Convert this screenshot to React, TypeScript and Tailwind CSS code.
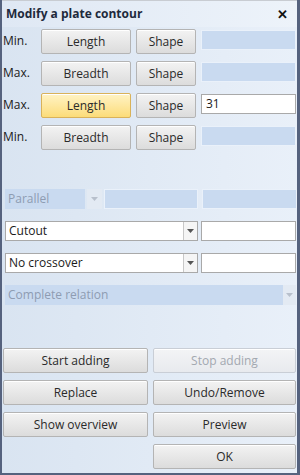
import React from "react";

const font = { fontFamily: '"Open Sans", "Noto Sans", sans-serif' };

function Btn({
  label,
  className = "",
  active = false,
  disabled = false,
}: {
  label: string;
  className?: string;
  active?: boolean;
  disabled?: boolean;
}) {
  const tone = active
    ? "border-[#d9b25a] bg-gradient-to-b from-[#fff3c4] to-[#fcdc78] text-[#2a2a2a]"
    : disabled
      ? "border-[#c9ced6] bg-gradient-to-b from-[#f3f4f6] to-[#e8eaee] text-[#a3a8b0]"
      : "border-[#b4b4b4] bg-gradient-to-b from-[#f3f3f3] to-[#dcdcdc] text-[#2a2a2a]";
  return (
    <div
      className={`flex h-[25px] items-center justify-center rounded-[2px] border text-[12px] shadow-[inset_0_1px_0_#ffffff] ${tone} ${className}`}
    >
      {label}
    </div>
  );
}

function BlueField({ className = "" }: { className?: string }) {
  return <div className={`h-[20px] border border-[#eaf1fa] bg-[#c9daf0] ${className}`} />;
}

function WhiteField({ value = "", className = "" }: { value?: string; className?: string }) {
  return (
    <div
      className={`flex h-[20px] items-center border border-[#a9a9a9] bg-white pl-[4px] text-[12px] text-[#1a1a1a] ${className}`}
    >
      {value}
    </div>
  );
}

function Arrow({ light = false }: { light?: boolean }) {
  return (
    <svg width="7" height="4" viewBox="0 0 7 4">
      <path d="M0 0H7L3.5 4Z" fill={light ? "#b8c0cc" : "#555"} />
    </svg>
  );
}

function Combo({ value, className = "" }: { value: string; className?: string }) {
  return (
    <div className={`flex h-[20px] border border-[#a9a9a9] bg-white ${className}`}>
      <div className="flex flex-1 items-center pl-[3px] text-[12px] text-[#1a1a1a]">{value}</div>
      <div className="flex w-[14px] items-center justify-center border-l border-[#c8c8c8] bg-[#f5f5f5]">
        <Arrow />
      </div>
    </div>
  );
}

function Row({ label, main, active = false, value }: { label: string; main: string; active?: boolean; value?: string }) {
  return (
    <div className="flex h-[25px]">
      <div className="w-[38px] pt-[3px] text-[12px] text-[#1a1a1a]">{label}</div>
      <Btn label={main} active={active} className="w-[90px]" />
      <Btn label="Shape" className="ml-[5px] w-[60px]" />
      {value !== undefined ? (
        <WhiteField value={value} className="ml-[5px] mt-[1px] w-[95px]" />
      ) : (
        <BlueField className="ml-[5px] mt-[1px] w-[95px]" />
      )}
    </div>
  );
}

export default function App() {
  return (
    <div
      style={font}
      className="flex h-[475px] w-[300px] flex-col border-b-[2px] border-l-[2px] border-r-[3px] border-[#55627e] bg-gradient-to-r from-[#d9e4f1] to-[#e9f0f9]"
    >
      <div className="flex h-[27px] items-center justify-between border-t border-[#c8ccd2] bg-gradient-to-r from-[#dfe8f4] to-[#edf3fa] pl-[4px] pr-[9px]">
        <span className="text-[12px] font-bold text-[#1e2a3c]">Modify a plate contour</span>
        <span className="text-[13px] font-bold leading-none text-[#111]">✕</span>
      </div>

      <div className="ml-[1px] mt-[2px] flex flex-col gap-[7px]">
        <Row label="Min." main="Length" />
        <Row label="Max." main="Breadth" />
        <Row label="Max." main="Length" active value="31" />
        <Row label="Min." main="Breadth" />
      </div>

      <div className="ml-[3px] mt-[39px] flex flex-col gap-[12px]">
        <div className="flex h-[20px]">
          <div className="flex w-[80px] items-center bg-[#c9daf0] pl-[3px] text-[12px] text-[#8e9cb2]">Parallel</div>
          <div className="ml-[2px] flex w-[15px] items-center justify-center bg-[#e3eaf3]">
            <Arrow light />
          </div>
          <BlueField className="ml-[2px] w-[95px]" />
          <BlueField className="ml-[4px] w-[95px]" />
        </div>
        <div className="flex">
          <Combo value="Cutout" className="w-[193px]" />
          <WhiteField className="ml-[3px] w-[95px]" />
        </div>
        <div className="flex">
          <Combo value="No crossover" className="w-[193px]" />
          <WhiteField className="ml-[3px] w-[95px]" />
        </div>
        <div className="flex h-[20px] w-[291px]">
          <div className="flex flex-1 items-center bg-[#c9daf0] pl-[3px] text-[12px] text-[#8e9cb2]">
            Complete relation
          </div>
          <div className="flex w-[13px] items-center justify-center bg-[#e3eaf3]">
            <Arrow light />
          </div>
        </div>
      </div>

      <div className="ml-[1px] mt-[43px] grid grid-cols-[145px_143px] gap-x-[5px] gap-y-[7px]">
        <Btn label="Start adding" />
        <Btn label="Stop adding" disabled />
        <Btn label="Replace" />
        <Btn label="Undo/Remove" />
        <Btn label="Show overview" />
        <Btn label="Preview" />
        <div />
        <Btn label="OK" />
      </div>
    </div>
  );
}
